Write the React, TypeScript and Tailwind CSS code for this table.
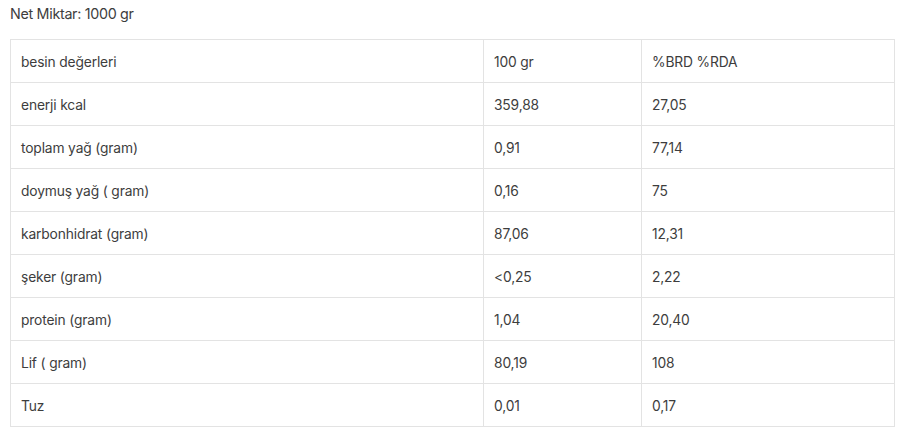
const ROWS: [string, string, string][] = [
  ["besin değerleri", "100 gr", "%BRD %RDA"],
  ["enerji kcal", "359,88", "27,05"],
  ["toplam yağ (gram)", "0,91", "77,14"],
  ["doymuş yağ ( gram)", "0,16", "75"],
  ["karbonhidrat (gram)", "87,06", "12,31"],
  ["şeker (gram)", "<0,25", "2,22"],
  ["protein (gram)", "1,04", "20,40"],
  ["Lif ( gram)", "80,19", "108"],
  ["Tuz", "0,01", "0,17"],
];

export default function App() {
  return (
    <div className="h-[436px] w-[907px] overflow-hidden bg-white pl-[10px] pt-[4px] text-[#3d3d3d] [font-family:Inter,'Liberation_Sans',sans-serif]">
      <p className="h-[20px] text-[14.3px] leading-[20px] tracking-[-0.3px]">Net Miktar: 1000 gr</p>
      <table className="mt-[15px] w-[884px] table-fixed border-collapse text-[13.8px] tracking-[-0.15px]">
        <colgroup>
          <col className="w-[473px]" />
          <col className="w-[158px]" />
          <col className="w-[253px]" />
        </colgroup>
        <tbody>
          {ROWS.map((r) => (
            <tr key={r[0]} className="h-[43px]">
              {r.map((c, i) => (
                <td key={i} className="border border-[#e3e3e3] pl-[10px] pr-[11px] pt-[3px] align-middle">
                  {c}
                </td>
              ))}
            </tr>
          ))}
        </tbody>
      </table>
    </div>
  );
}
